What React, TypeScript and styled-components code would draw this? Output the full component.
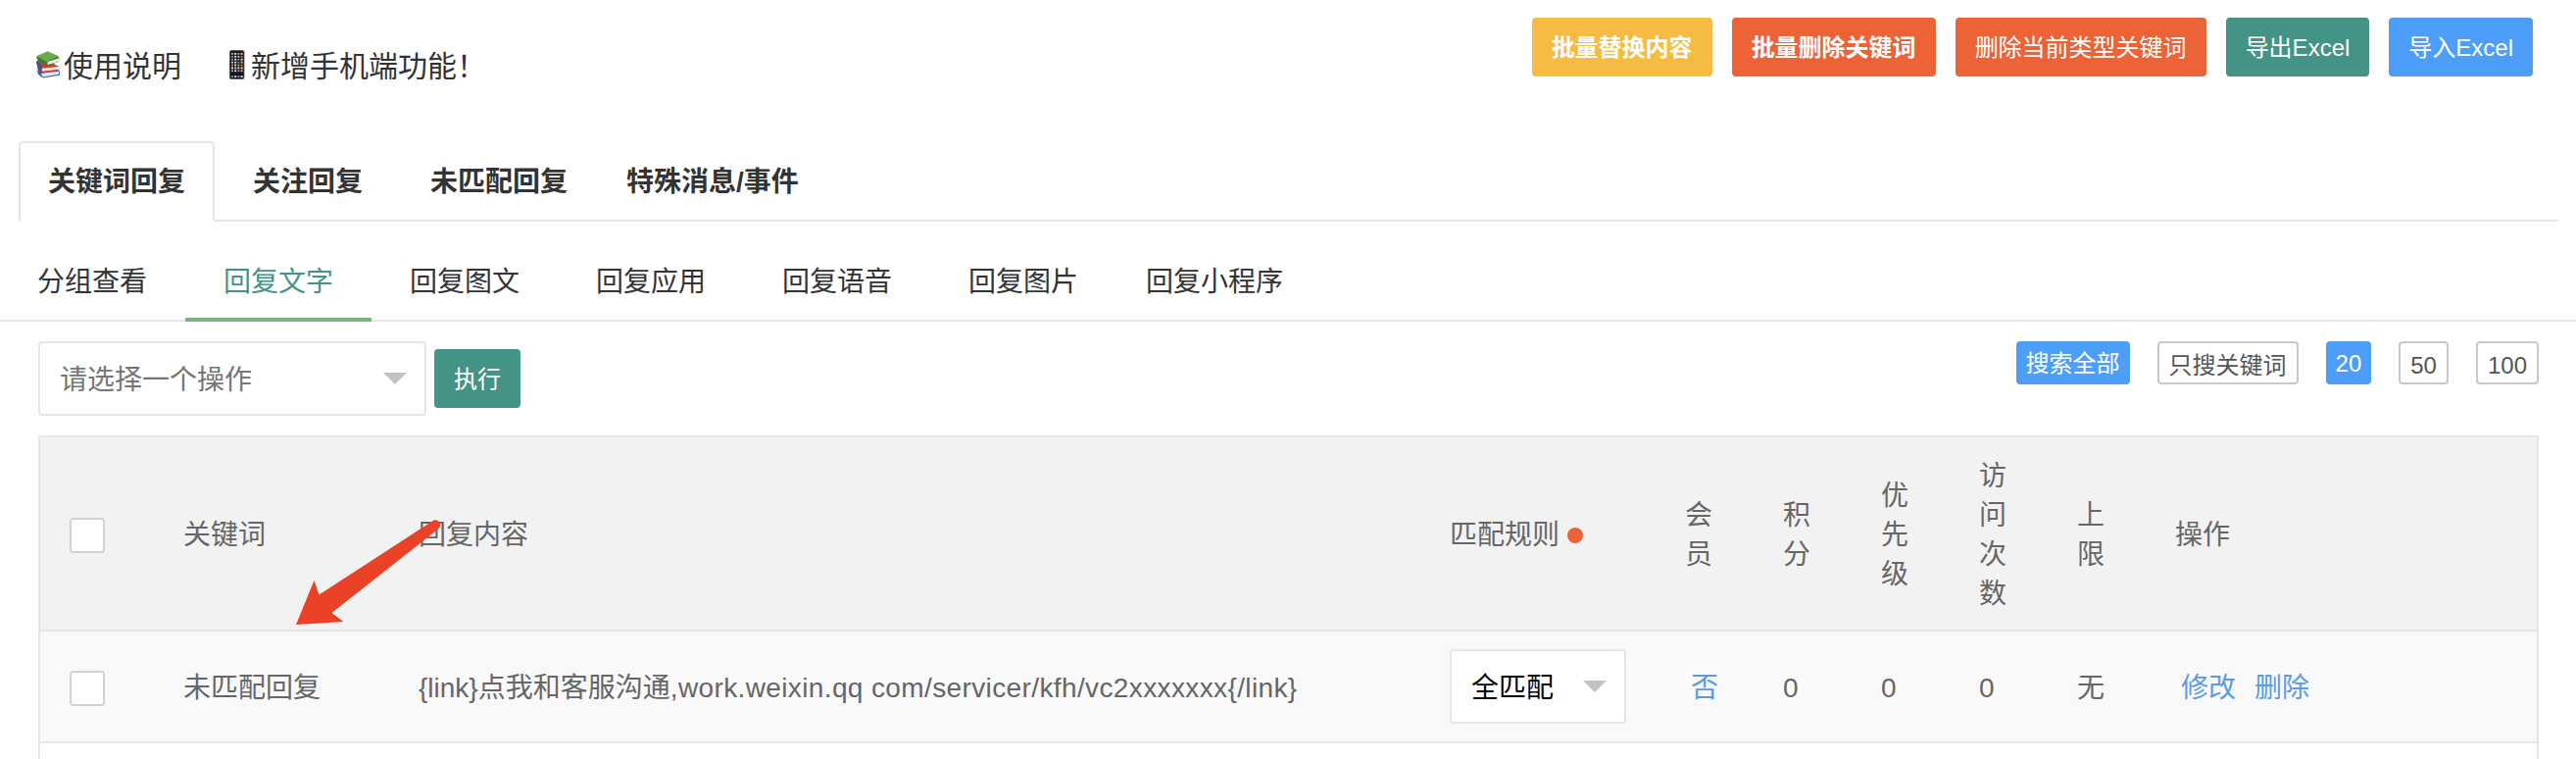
// App.tsx
import styled, { createGlobalStyle, css } from "styled-components";

const GlobalStyle = createGlobalStyle`
    * {
        box-sizing: border-box;
    }
    body {
        margin: 0;
        background: #fff;
        color: #333;
        font-family: "Liberation Sans", "Noto Sans CJK SC", sans-serif;
        font-size: 28px;
        line-height: 40px;
        overflow: hidden;
    }
`;

const COLORS = {
    yellow: "#f5bb42",
    orange: "#ec6337",
    green: "#439487",
    blue: "#4d9ef9",
};

const Page = styled.div`
    height: 774px;
    overflow: hidden;
`;

const TopBar = styled.header`
    display: flex;
    justify-content: space-between;
    align-items: flex-start;
    height: 144px;
    padding: 18px 44px 0 36px;
`;

const Notices = styled.div`
    display: flex;
    padding-top: 30px;
    font-size: 30px;
`;

const Notice = styled.div<{ $gap?: number }>`
    display: flex;
    align-items: center;
    margin-right: ${({ $gap }) => $gap ?? 0}px;

    svg {
        flex: none;
        margin-top: -4px;
    }
`;

const ButtonGroup = styled.div`
    display: flex;
    gap: 20px;
`;

const Button = styled.button<{ $color: string; $bold?: boolean }>`
    height: 60px;
    padding: 2px 20px 0;
    border: none;
    border-radius: 4px;
    background: ${({ $color }) => $color};
    color: #fff;
    font-family: inherit;
    font-size: 24px;
    font-weight: ${({ $bold }) => ($bold ? 700 : 400)};
    line-height: 58px;
    white-space: nowrap;
`;

const MainTabs = styled.nav`
    display: flex;
    height: 82px;
    margin: 0 18px 0 19px;
`;

const MainTab = styled.div<{ $active?: boolean }>`
    min-width: 190px;
    padding: 0 30px;
    border-bottom: 2px solid #e6e6e6;
    font-weight: 700;
    line-height: 84px;
    text-align: center;
    ${({ $active }) =>
        $active &&
        css`
            padding: 0 28px;
            border: 2px solid #e6e6e6;
            border-bottom-color: #fff;
            border-radius: 4px 4px 0 0;
            line-height: 80px;
        `}
`;

const TabFill = styled.div`
    flex: 1;
    border-bottom: 2px solid #e6e6e6;
`;

const SubTabs = styled.nav`
    display: flex;
    height: 102px;
    padding-top: 20px;
    border-bottom: 2px solid #e6e6e6;
`;

const SubTab = styled.div<{ $active?: boolean }>`
    min-width: 190px;
    height: 82px;
    padding: 0 30px;
    line-height: 84px;
    text-align: center;

    &:first-child {
        margin-left: -1px;
    }
    ${({ $active }) =>
        $active &&
        css`
            border-bottom: 4px solid #76b57c;
            color: ${COLORS.green};
        `}
`;

const Toolbar = styled.div`
    display: flex;
    justify-content: space-between;
    align-items: flex-start;
    padding: 20px 38px 20px 39px;
`;

const Actions = styled.div`
    display: flex;
    align-items: center;
    gap: 8px;
`;

const SelectBox = styled.div<{ $width: number; $color: string }>`
    display: flex;
    justify-content: space-between;
    align-items: center;
    width: ${({ $width }) => $width}px;
    height: 76px;
    padding: 0 18px 0 20px;
    border: 2px solid #e6e6e6;
    border-radius: 4px;
    background: #fff;
    color: ${({ $color }) => $color};
    line-height: 76px;
`;

const Caret = styled.i`
    border: 12px solid transparent;
    border-top-color: #c2c2c2;
    border-bottom: none;
`;

const SelectLabel = styled.span`
    padding-top: 4px;
`;

const Filters = styled.div`
    display: flex;
    gap: 28px;
`;

const Filter = styled.span<{ $active?: boolean }>`
    height: 44px;
    padding: 0 10px;
    border-radius: 4px;
    font-size: 24px;
    line-height: 46px;
    ${({ $active }) =>
        $active
            ? css`
                  background: ${COLORS.blue};
                  color: #fff;
              `
            : css`
                  border: 2px solid #c9c9c9;
                  color: #555;
              `}
`;

const Table = styled.div`
    height: 340px;
    margin: 0 38px 0 39px;
    border: 2px solid #e6e6e6;
`;

const Row = styled.div<{ $head?: boolean }>`
    display: grid;
    grid-template-columns: 116px 240px 1052px 240px repeat(5, 100px) 1fr;
    align-items: center;
    height: ${({ $head }) => ($head ? 198 : 114)}px;
    border-bottom: 2px solid #e6e6e6;
    background: ${({ $head }) => ($head ? "#f2f2f2" : "#f9f9f9")};
    color: #666;
`;

const Cell = styled.div<{ $flush?: boolean }>`
    display: flex;
    align-items: center;
    padding: ${({ $flush }) => ($flush ? 0 : 4)}px 30px 0;
`;

const NarrowCell = styled.div`
    padding: 4px 30px 0;
    word-break: break-all;
`;

const Url = styled.span`
    letter-spacing: 0.38px;
`;

const Checkbox = styled.span`
    width: 36px;
    height: 36px;
    border: 2px solid #d2d2d2;
    border-radius: 4px;
    background: #fff;
`;

const Dot = styled.span`
    width: 16px;
    height: 16px;
    margin-left: 8px;
    border-radius: 50%;
    background: ${COLORS.orange};
`;

const Link = styled.a`
    margin-left: 6px;
    color: #5b9be6;

    & + & {
        margin-left: 19px;
    }
`;

// 标注箭头，浮在表格上方
const Arrow = styled.svg`
    position: absolute;
    left: 300px;
    top: 528px;
`;

const BooksIcon = () => (
    <svg width="29" height="30" viewBox="0 0 30 30">
        <path d="M2 21 L17 18 L26 22 L26 26 L8 29 L3 25Z" fill="#4459a8" />
        <path d="M6 24 L25 22 L25 25 L8 28Z" fill="#e4e4ee" />
        <path d="M1 11 L14 11 L25 17 L25 21 L7 24 L3 21Z" fill="#cf3d29" />
        <path d="M6 19 L25 17 L25 20 L7 22Z" fill="#f0e7e2" />
        <path d="M1 11 L3 11 L7 17 L7 23 L3 20Z" fill="#3457a0" />
        <path d="M1 7 L13 1 L25 7 L25 12 L13 16 L3 11Z" fill="#397f31" />
        <path d="M13 12 L25 8 L25 12 L13 15Z" fill="#e6eadb" />
        <path d="M1 6 L13 1 L25 6 L12 12Z" fill="#6bab50" />
    </svg>
);

const APP_COLORS = ["#65d67c", "#e8e8e8", "#d968d8", "#eac750", "#4aa3e8", "#f0623e"];

const PhoneIcon = () => (
    <svg width="22" height="30" viewBox="0 0 22 30">
        <rect x="0.5" y="0.5" width="14.5" height="29" rx="1.5" fill="#17171b" stroke="#555" strokeWidth="0.8" />
        {[0, 1, 2, 3, 4, 5, 6, 8].map((row) =>
            [0, 1, 2, 3].map((col) => (
                <rect
                    key={`${row}-${col}`}
                    x={2 + col * 3.2}
                    y={3 + row * 2.9}
                    width="2"
                    height="1.8"
                    fill={APP_COLORS[(row * 5 + col * (row + 1)) % 6]}
                />
            ))
        )}
    </svg>
);

const MAIN_TABS = ["关键词回复", "关注回复", "未匹配回复", "特殊消息/事件"];
const SUB_TABS = ["分组查看", "回复文字", "回复图文", "回复应用", "回复语音", "回复图片", "回复小程序"];
const FILTERS = ["搜索全部", "只搜关键词", "20", "50", "100"];
const NARROW_HEADS = ["会员", "积分", "优先级", "访问次数", "上限"];

export default function App() {
    return (
        <Page>
            <GlobalStyle />
            {/* 顶部 */}
            <TopBar>
                <Notices>
                    <Notice $gap={49}>
                        <BooksIcon />
                        使用说明
                    </Notice>
                    <Notice>
                        <PhoneIcon />
                        新增手机端功能！
                    </Notice>
                </Notices>
                <ButtonGroup>
                    <Button $color={COLORS.yellow} $bold>批量替换内容</Button>
                    <Button $color={COLORS.orange} $bold>批量删除关键词</Button>
                    <Button $color={COLORS.orange}>删除当前类型关键词</Button>
                    <Button $color={COLORS.green}>导出Excel</Button>
                    <Button $color={COLORS.blue}>导入Excel</Button>
                </ButtonGroup>
            </TopBar>

            {/* 标签页 */}
            <MainTabs>
                {MAIN_TABS.map((tab, i) => (
                    <MainTab key={tab} $active={i === 0}>{tab}</MainTab>
                ))}
                <TabFill />
            </MainTabs>
            <SubTabs>
                {SUB_TABS.map((tab, i) => (
                    <SubTab key={tab} $active={i === 1}>{tab}</SubTab>
                ))}
            </SubTabs>

            {/* 操作栏 */}
            <Toolbar>
                <Actions>
                    <SelectBox $width={396} $color="#757575">
                        <SelectLabel>请选择一个操作</SelectLabel>
                        <Caret />
                    </SelectBox>
                    <Button $color={COLORS.green}>执行</Button>
                </Actions>
                <Filters>
                    {FILTERS.map((filter) => (
                        <Filter key={filter} $active={filter === "搜索全部" || filter === "20"}>{filter}</Filter>
                    ))}
                </Filters>
            </Toolbar>

            {/* 表格 */}
            <Table>
                <Row $head>
                    <Cell><Checkbox /></Cell>
                    <Cell>关键词</Cell>
                    <Cell>回复内容</Cell>
                    <Cell>
                        匹配规则
                        <Dot />
                    </Cell>
                    {NARROW_HEADS.map((head) => (
                        <NarrowCell key={head}>{head}</NarrowCell>
                    ))}
                    <Cell>操作</Cell>
                </Row>
                <Row>
                    <Cell><Checkbox /></Cell>
                    <Cell>未匹配回复</Cell>
                    <Cell>
                        {"{link}点我和客服沟通"}
                        <Url>{",work.weixin.qq com/servicer/kfh/vc2xxxxxxx{/link}"}</Url>
                    </Cell>
                    <Cell $flush>
                        <SelectBox $width={180} $color="#000">
                            <SelectLabel>全匹配</SelectLabel>
                            <Caret />
                        </SelectBox>
                    </Cell>
                    <Cell><Link>否</Link></Cell>
                    <Cell>0</Cell>
                    <Cell>0</Cell>
                    <Cell>0</Cell>
                    <Cell>无</Cell>
                    <Cell>
                        <Link>修改</Link>
                        <Link>删除</Link>
                    </Cell>
                </Row>
            </Table>

            <Arrow width="152" height="112" viewBox="0 0 152 112">
                <path
                    d="M2 109 L20.5 64 L25.5 78.5 L141 3.5 Q145 0.8 148 4 Q151 8 147 11.5 L38.5 97 L50.5 106Z"
                    fill="#ea4127"
                />
            </Arrow>
        </Page>
    );
}
